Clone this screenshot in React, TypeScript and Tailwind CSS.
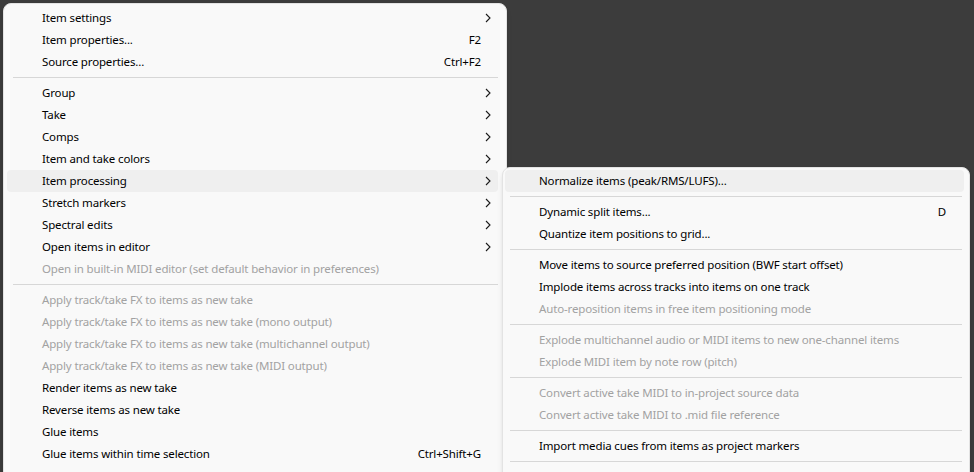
import React from 'react';

type Item =
  | { sep: true }
  | { label: string; shortcut?: string; sub?: boolean; disabled?: boolean; active?: boolean };

const mainItems: Item[] = [
  { label: 'Item settings', sub: true },
  { label: 'Item properties...', shortcut: 'F2' },
  { label: 'Source properties...', shortcut: 'Ctrl+F2' },
  { sep: true },
  { label: 'Group', sub: true },
  { label: 'Take', sub: true },
  { label: 'Comps', sub: true },
  { label: 'Item and take colors', sub: true },
  { label: 'Item processing', sub: true, active: true },
  { label: 'Stretch markers', sub: true },
  { label: 'Spectral edits', sub: true },
  { label: 'Open items in editor', sub: true },
  { label: 'Open in built-in MIDI editor (set default behavior in preferences)', disabled: true },
  { sep: true },
  { label: 'Apply track/take FX to items as new take', disabled: true },
  { label: 'Apply track/take FX to items as new take (mono output)', disabled: true },
  { label: 'Apply track/take FX to items as new take (multichannel output)', disabled: true },
  { label: 'Apply track/take FX to items as new take (MIDI output)', disabled: true },
  { label: 'Render items as new take' },
  { label: 'Reverse items as new take' },
  { label: 'Glue items' },
  { label: 'Glue items within time selection', shortcut: 'Ctrl+Shift+G' },
  { label: 'Move items to new lanes' },
];

const subItems: Item[] = [
  { label: 'Normalize items (peak/RMS/LUFS)...', active: true },
  { sep: true },
  { label: 'Dynamic split items...', shortcut: 'D' },
  { label: 'Quantize item positions to grid...' },
  { sep: true },
  { label: 'Move items to source preferred position (BWF start offset)' },
  { label: 'Implode items across tracks into items on one track' },
  { label: 'Auto-reposition items in free item positioning mode', disabled: true },
  { sep: true },
  { label: 'Explode multichannel audio or MIDI items to new one-channel items', disabled: true },
  { label: 'Explode MIDI item by note row (pitch)', disabled: true },
  { sep: true },
  { label: 'Convert active take MIDI to in-project source data', disabled: true },
  { label: 'Convert active take MIDI to .mid file reference', disabled: true },
  { sep: true },
  { label: 'Import media cues from items as project markers' },
  { sep: true },
];

function Chevron() {
  return (
    <svg width="6" height="10" viewBox="0 0 6 10" className="shrink-0">
      <polyline points="1,1 5,5 1,9" fill="none" stroke="#1a1a1a" strokeWidth="1.1" />
    </svg>
  );
}

interface MenuProps {
  items: Item[];
  rowClass: string;
  sepClass: string;
}

function Menu({ items, rowClass, sepClass }: MenuProps) {
  return (
    <div className="flex flex-col">
      {items.map((it, i) =>
        'sep' in it ? (
          <div key={i} className={`h-[9px] flex items-center ${sepClass}`}>
            <div className="h-px w-full bg-[#d7d7d7]" />
          </div>
        ) : (
          <div
            key={i}
            className={`h-[22px] rounded-[4px] flex items-center ${rowClass} ${
              it.active ? 'bg-[#efefef]' : ''
            } ${it.disabled ? 'text-[#a2a2a2]' : 'text-black'}`}
          >
            <span className="flex-1 whitespace-nowrap">{it.label}</span>
            {it.shortcut && <span className="whitespace-nowrap">{it.shortcut}</span>}
            {it.sub && (
              <span className="w-[10px] flex justify-end -mr-[10px]">
                <Chevron />
              </span>
            )}
          </div>
        )
      )}
    </div>
  );
}

export default function App() {
  return (
    <div
      className="relative w-[974px] h-[472px] overflow-hidden bg-[#3c3c3c] text-[11.5px] tracking-[-0.15px] leading-none"
      style={{ fontFamily: '"Noto Sans", "Open Sans", sans-serif' }}
    >
      <div className="absolute left-[3px] top-[3px] w-[504px] h-[520px] bg-[#f9f9f9] border border-[#e3e3e3] rounded-[8px] pt-[3px] shadow-md">
        <Menu items={mainItems} rowClass="ml-[3px] mr-[8px] pl-[35px] pr-[17px]" sepClass="ml-[9px] mr-[8px]" />
      </div>
      <div className="absolute left-[502px] top-[167px] w-[468px] h-[360px] bg-[#f9f9f9] border border-[#e3e3e3] rounded-[8px] pt-[2px] shadow-md">
        <Menu items={subItems} rowClass="ml-[2px] mr-[5px] pl-[34px] pr-[18px]" sepClass="ml-[7px] mr-[7px]" />
      </div>
    </div>
  );
}
